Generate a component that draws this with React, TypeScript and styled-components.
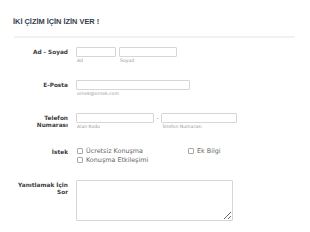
import React from "react";
import styled, { createGlobalStyle } from "styled-components";

const GlobalStyle = createGlobalStyle`
  html, body {
    margin: 0;
    padding: 0;
    background: #ffffff;
  }
  body {
    font-family: "DejaVu Sans", Verdana, sans-serif;
    width: 310px;
    height: 232px;
    overflow: hidden;
  }
`;

const Page = styled.div`
  padding: 17px 15px 0 13px;
`;

const Title = styled.h1`
  margin: 0;
  font-family: "Liberation Sans", Arial, sans-serif;
  font-weight: 700;
  font-size: 7.4px;
  line-height: 9px;
  color: #333d4b;
`;

const Divider = styled.hr`
  margin: 10px 0 9px 1px;
  border: none;
  height: 2px;
  background: #f1f1f1;
`;

const Row = styled.div<{ $after: number }>`
  display: flex;
  gap: 8px;
  margin-bottom: ${({ $after }) => $after}px;
`;

const Label = styled.label`
  flex: 0 0 55px;
  text-align: right;
  font-weight: 700;
  font-size: 5.8px;
  line-height: 7px;
  padding-top: 1.5px;
  color: #3c3c3c;
  white-space: nowrap;
`;

const Fields = styled.div`
  display: flex;
  align-items: flex-start;
`;

const Field = styled.div`
  display: flex;
  flex-direction: column;
`;

const TextInput = styled.input<{ $w: number }>`
  box-sizing: border-box;
  width: ${({ $w }) => $w}px;
  height: 10px;
  margin: 0;
  padding: 0 2px;
  border: 1px solid #d6d6d6;
  border-radius: 1px;
  background: #fff;
  font-size: 5px;
  outline: none;
`;

const Sub = styled.span`
  font-size: 4.6px;
  line-height: 6px;
  margin-top: 1px;
  padding-left: 1px;
  color: #9a9a9a;
  white-space: nowrap;
`;

const Dash = styled.span`
  font-size: 6px;
  line-height: 10px;
  color: #888;
  width: 7px;
  text-align: center;
`;

const Spacer = styled.span`
  width: 3px;
`;

const Checks = styled.div`
  display: grid;
  grid-template-columns: 111px auto;
  row-gap: 1px;
  padding-left: 1px;
`;

const CheckItem = styled.label`
  display: flex;
  align-items: center;
  gap: 3px;
  font-size: 6.4px;
  line-height: 8px;
  color: #666;
  white-space: nowrap;
`;

const Box = styled.input`
  appearance: none;
  box-sizing: border-box;
  width: 6px;
  height: 6px;
  margin: 0;
  border: 1px solid #a8a8a8;
  border-radius: 1px;
  background: #fff;
`;

const Area = styled.textarea`
  box-sizing: border-box;
  width: 157px;
  height: 41px;
  margin: 0;
  border: 1px solid #d6d6d6;
  border-radius: 1px;
  resize: vertical;
  outline: none;
`;

export default function App() {
  return (
    <>
      <GlobalStyle />
      <Page>
        <Title>İKİ ÇİZİM İÇİN İZİN VER !</Title>
        <Divider />

        <Row $after={16}>
          <Label>Ad - Soyad</Label>
          <Fields>
            <Field>
              <TextInput $w={40} />
              <Sub>Ad</Sub>
            </Field>
            <Spacer />
            <Field>
              <TextInput $w={58} />
              <Sub>Soyad</Sub>
            </Field>
          </Fields>
        </Row>

        <Row $after={16}>
          <Label>E-Posta</Label>
          <Field>
            <TextInput $w={114} />
            <Sub>ornek@ornek.com</Sub>
          </Field>
        </Row>

        <Row $after={17}>
          <Label>
            Telefon
            <br />
            Numarası
          </Label>
          <Fields>
            <Field>
              <TextInput $w={78} />
              <Sub>Alan Kodu</Sub>
            </Field>
            <Dash>-</Dash>
            <Field>
              <TextInput $w={76} />
              <Sub>Telefon Numarası</Sub>
            </Field>
          </Fields>
        </Row>

        <Row $after={16}>
          <Label>İstek</Label>
          <Checks>
            <CheckItem>
              <Box type="checkbox" />
              Ücretsiz Konuşma
            </CheckItem>
            <CheckItem>
              <Box type="checkbox" />
              Ek Bilgi
            </CheckItem>
            <CheckItem>
              <Box type="checkbox" />
              Konuşma Etkileşimi
            </CheckItem>
          </Checks>
        </Row>

        <Row $after={0}>
          <Label>
            Yanıtlamak İçin
            <br />
            Sor
          </Label>
          <Area />
        </Row>
      </Page>
    </>
  );
}
